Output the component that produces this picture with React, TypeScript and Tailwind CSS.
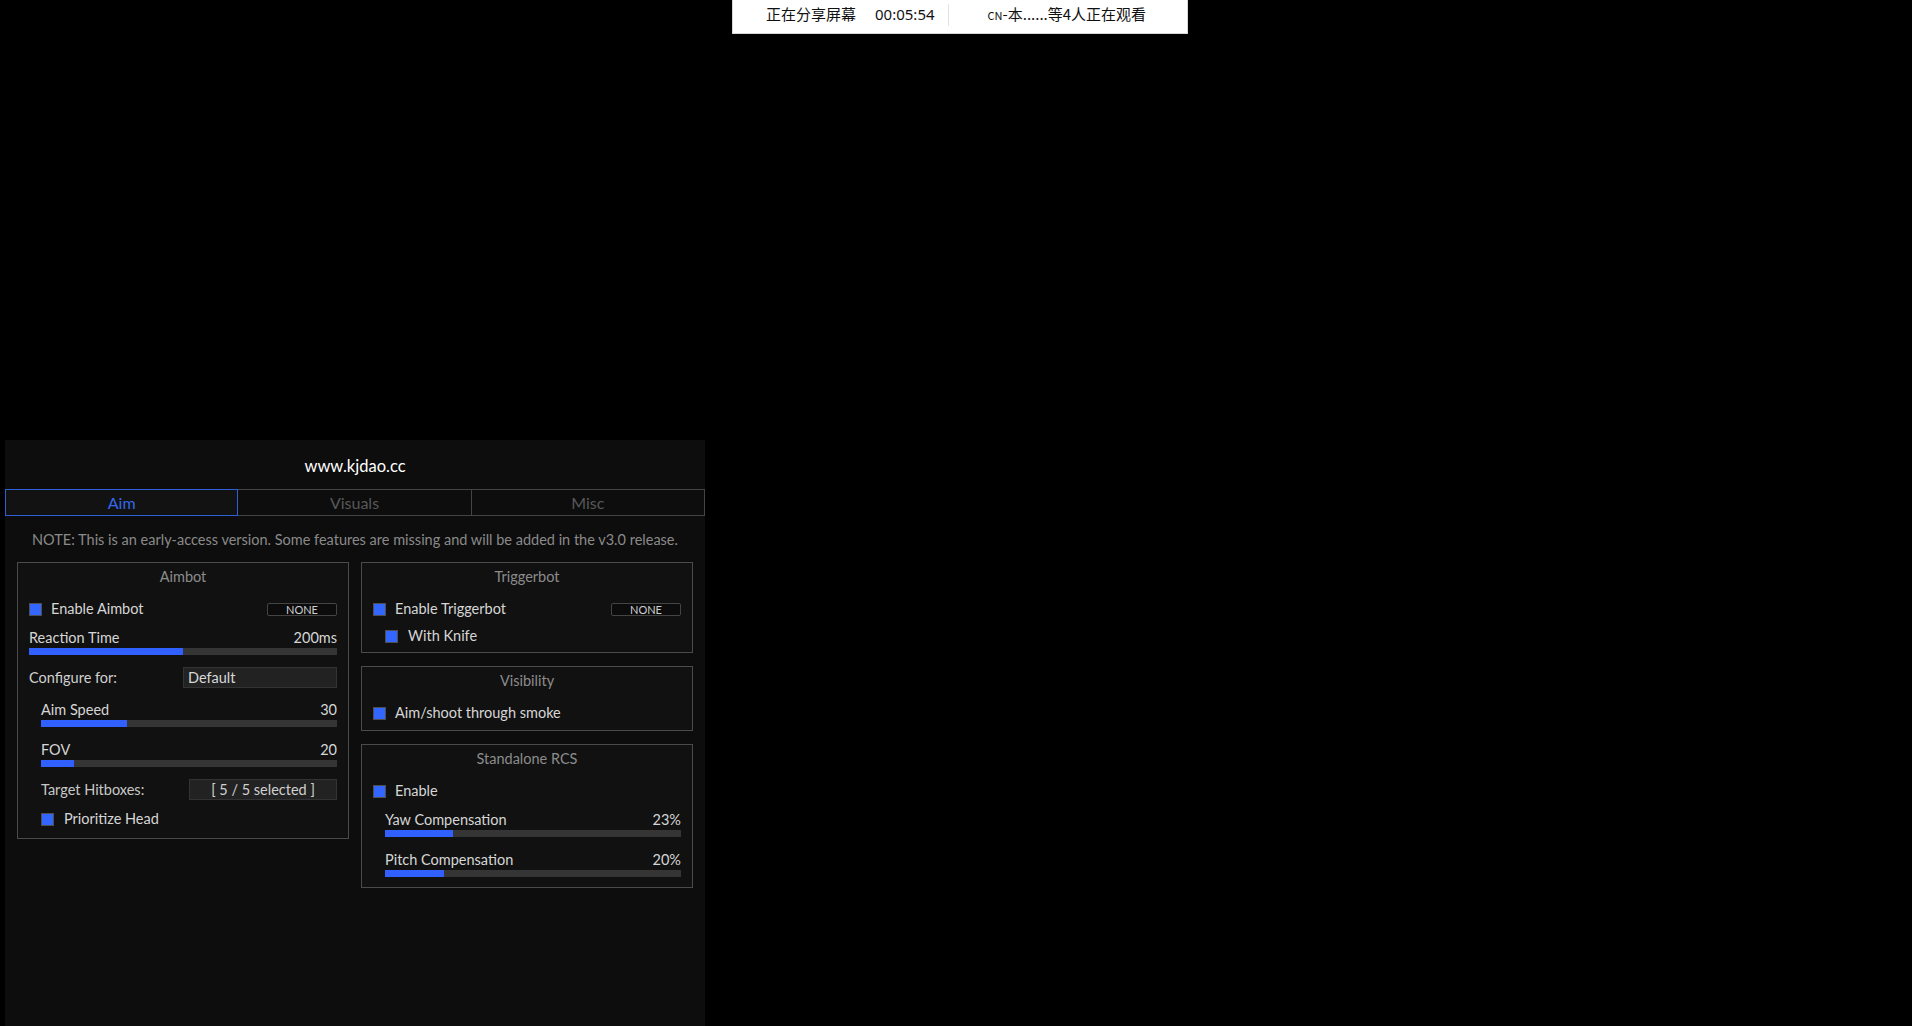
import React from 'react';

const font = { fontFamily: 'Lato, "Noto Sans CJK SC", sans-serif' };

function Check({ className = '' }: { className?: string }) {
  return <span className={`inline-block w-[13px] h-[13px] bg-[#3366ff] border border-[#4f4f4f] shrink-0 ${className}`} />;
}

function KeyBtn() {
  return (
    <div className="w-[70px] h-[13px] border border-[#444] rounded-[2px] bg-[#0c0c0c] flex items-center justify-center text-[11px] leading-none text-[#d0d0d0]">
      NONE
    </div>
  );
}

function Slider({ label, value, pct, className = '' }: { label: string; value: string; pct: number; className?: string }) {
  return (
    <div className={className}>
      <div className="flex justify-between items-center h-[18px] text-[#d6d6d6]">
        <span>{label}</span>
        <span>{value}</span>
      </div>
      <div className="h-[7px] bg-[#353535] mt-[1px]">
        <div className="h-full bg-[#3060ff]" style={{ width: `${pct}%` }} />
      </div>
    </div>
  );
}

function Box({ title, children, className = '' }: { title: string; children: React.ReactNode; className?: string }) {
  return (
    <div className={`border border-[#4a4a4a] bg-[#111111] px-[11px] ${className}`}>
      <div className="h-[28px] flex items-center justify-center text-[#8c8c8c]">{title}</div>
      {children}
    </div>
  );
}

export default function App() {
  return (
    <div className="relative w-full h-[1026px] bg-black overflow-hidden" style={font}>
      {/* screen-share banner */}
      <div className="absolute top-0 left-[732px] w-[456px] h-[34px] pb-[4px] bg-white border border-[#d8d8d8] border-t-0 flex items-center text-[15px] text-[#111]" style={{ fontFamily: '"Noto Sans CJK SC", "Noto Sans", sans-serif' }}>
        <span className="ml-[33px]">正在分享屏幕</span>
        <span className="ml-[19px]" style={{ fontFamily: '"Noto Sans", sans-serif' }}>00:05:54</span>
        <span className="ml-[13px] w-px h-[22px] bg-[#e2e2e2]" />
        <span className="ml-[39px]"><span className="text-[11px]">CN</span>-本......等4人正在观看</span>
      </div>

      {/* cheat menu */}
      <div className="ml-[5px] mt-[440px] w-[700px] h-[586px] bg-[#0d0d0d] text-[14.5px]">
        <div className="h-[49px] flex items-center justify-center text-white text-[16.5px] pt-[4px]">www.kjdao.cc</div>
        <div className="grid grid-cols-3 h-[27px]">
          <div className="border border-[#2e5fd8] bg-[#121212] text-[#3468ea] flex items-center justify-center text-[16px]">Aim</div>
          <div className="border border-l-0 border-[#444] text-[#585858] flex items-center justify-center text-[16px]">Visuals</div>
          <div className="border border-l-0 border-[#444] text-[#585858] flex items-center justify-center text-[16px]">Misc</div>
        </div>
        <div className="mt-[14px] h-[20px] flex items-center justify-center text-[#8a8a8a] text-[14.5px]">
          NOTE: This is an early-access version. Some features are missing and will be added in the v3.0 release.
        </div>

        <div className="mt-[12px] px-[12px] grid grid-cols-2 gap-[12px] items-start">
          <Box title="Aimbot" className="pb-[9px]">
            <div className="mt-[8px] h-[20px] flex items-center text-[#d6d6d6]">
              <Check />
              <span className="ml-[9px] flex-1">Enable Aimbot</span>
              <KeyBtn />
            </div>
            <Slider label="Reaction Time" value="200ms" pct={50} className="mt-[10px]" />
            <div className="mt-[12px] h-[21px] flex items-center text-[#d0d0d0]">
              <span className="w-[154px]">Configure for:</span>
              <div className="flex-1 h-full bg-[#222] border border-[#333] flex items-center pl-[4px] text-[#d8d8d8]">Default</div>
            </div>
            <div className="ml-[12px]">
              <Slider label="Aim Speed" value="30" pct={29} className="mt-[13px]" />
              <Slider label="FOV" value="20" pct={11} className="mt-[14px]" />
              <div className="mt-[12px] h-[21px] flex items-center text-[#c8c8c8]">
                <span className="w-[148px]">Target Hitboxes:</span>
                <div className="flex-1 h-full bg-[#222] border border-[#333] flex items-center justify-center text-[#d0d0d0]">[ 5 / 5 selected ]</div>
              </div>
              <div className="mt-[9px] h-[20px] flex items-center text-[#d6d6d6]">
                <Check />
                <span className="ml-[10px]">Prioritize Head</span>
              </div>
            </div>
          </Box>

          <div className="flex flex-col gap-[13px]">
            <Box title="Triggerbot" className="pb-[6px]">
              <div className="mt-[8px] h-[20px] flex items-center text-[#d6d6d6]">
                <Check />
                <span className="ml-[9px] flex-1">Enable Triggerbot</span>
                <KeyBtn />
              </div>
              <div className="mt-[7px] ml-[12px] h-[20px] flex items-center text-[#d6d6d6]">
                <Check />
                <span className="ml-[10px]">With Knife</span>
              </div>
            </Box>
            <Box title="Visibility" className="pb-[7px]">
              <div className="mt-[8px] h-[20px] flex items-center text-[#d6d6d6]">
                <Check />
                <span className="ml-[9px]">Aim/shoot through smoke</span>
              </div>
            </Box>
            <Box title="Standalone RCS" className="pb-[10px]">
              <div className="mt-[8px] h-[20px] flex items-center text-[#d6d6d6]">
                <Check />
                <span className="ml-[9px]">Enable</span>
              </div>
              <div className="ml-[12px]">
                <Slider label="Yaw Compensation" value="23%" pct={23} className="mt-[10px]" />
                <Slider label="Pitch Compensation" value="20%" pct={20} className="mt-[14px]" />
              </div>
            </Box>
          </div>
        </div>
      </div>
    </div>
  );
}
